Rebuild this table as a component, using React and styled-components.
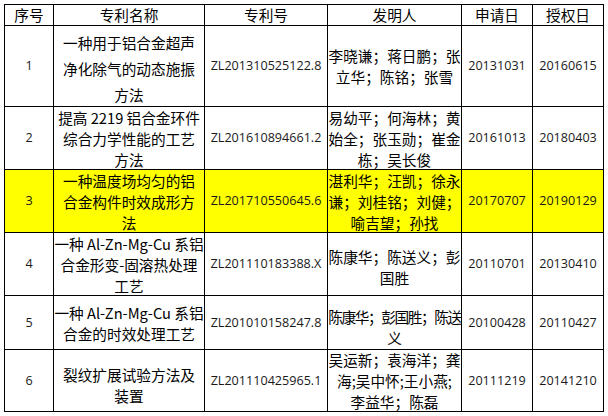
import React from "react";
import styled, { createGlobalStyle } from "styled-components";

const GlobalStyle = createGlobalStyle`
  html, body {
    margin: 0;
    padding: 0;
    background: #ffffff;
  }
  body {
    font-family: "Noto Sans CJK SC", "Noto Sans", sans-serif;
    color: #000000;
  }
`;

const columns = [
  { key: "no", label: "序号", width: 49 },
  { key: "title", label: "专利名称", width: 151 },
  { key: "num", label: "专利号", width: 123 },
  { key: "inventors", label: "发明人", width: 134 },
  { key: "applied", label: "申请日", width: 71 },
  { key: "granted", label: "授权日", width: 71 },
];

const patents = [
  {
    no: "1",
    title: ["一种用于铝合金超声", "净化除气的动态施振", "方法"],
    titleGap: 26,
    titleShift: 3,
    num: "ZL201310525122.8",
    inventors: ["李晓谦；蒋日鹏；张", "立华；陈铭；张雪"],
    applied: "20131031",
    granted: "20160615",
    height: 81,
  },
  {
    no: "2",
    title: ["提高 2219 铝合金环件", "综合力学性能的工艺", "方法"],
    num: "ZL201610894661.2",
    inventors: ["易幼平；何海林；黄", "始全；张玉勋；崔金", "栋；吴长俊"],
    applied: "20161013",
    granted: "20180403",
    height: 63,
  },
  {
    no: "3",
    title: ["一种温度场均匀的铝", "合金构件时效成形方", "法"],
    num: "ZL201710550645.6",
    inventors: ["湛利华；汪凯；徐永", "谦；刘桂铭；刘健；", "喻吉望；孙找"],
    applied: "20170707",
    granted: "20190129",
    height: 63,
    highlight: true,
  },
  {
    no: "4",
    title: ["一种 Al-Zn-Mg-Cu 系铝", "合金形变-固溶热处理", "工艺"],
    num: "ZL201110183388.X",
    inventors: ["陈康华；陈送义；彭", "国胜"],
    inventorsShift: 3,
    applied: "20110701",
    granted: "20130410",
    height: 63,
  },
  {
    no: "5",
    title: ["一种 Al-Zn-Mg-Cu 系铝", "合金的时效处理工艺"],
    num: "ZL201010158247.8",
    inventors: ["陈康华；彭国胜；陈送", "义"],
    inventorsTight: true,
    inventorsShift: 4,
    applied: "20100428",
    granted: "20110427",
    height: 54,
  },
  {
    no: "6",
    title: ["裂纹扩展试验方法及", "装置"],
    titleShift: 4,
    num: "ZL201110425965.1",
    inventors: ["吴运新；袁海洋；龚", "海;吴中怀;王小燕;", "李益华；陈磊"],
    applied: "20111219",
    granted: "20141210",
    height: 62,
  },
];

const Sheet = styled.div`
  padding: 4px 0 0 4px;
`;

const Table = styled.table`
  border-collapse: collapse;
  table-layout: fixed;
  width: 600px;
`;

const HeadCell = styled.th`
  padding: 0;
  border: 1px solid #000;
  font-weight: normal;
`;

const Row = styled.tr`
  background: ${(p) => (p.$highlight ? "#ffff00" : "#ffffff")};
`;

const Cell = styled.td`
  padding: 0;
  border: 1px solid #000;
`;

const Content = styled.div`
  height: ${(p) => p.$height - 1}px;
  display: flex;
  flex-direction: column;
  justify-content: center;
  align-items: center;
  overflow: visible;
  white-space: nowrap;
  padding-top: ${(p) => (p.$shift || 0) * 2}px;
  box-sizing: border-box;
  font-size: ${(p) => (p.$latin ? "12.6px" : "14.67px")};
  line-height: 20px;
  font-family: ${(p) =>
    p.$latin
      ? '"Open Sans", "Noto Sans", sans-serif'
      : '"Noto Sans CJK SC", "Noto Sans", sans-serif'};
  color: ${(p) => (p.$latin ? "#1a1a1a" : "#000")};
`;

const Line = styled.span`
  display: block;
  flex: none;
  line-height: ${(p) => p.$gap || 21}px;
  letter-spacing: ${(p) => (p.$tight ? "-1.4px" : "0")};
  margin: ${(p) => (p.$tight ? "0 -4px" : "0")};
`;

const Lines = ({ items, gap, tight }) =>
  items.map((text, i) => (
    <Line key={i} $gap={gap} $tight={tight && i === 0}>
      {text}
    </Line>
  ));

export default function App() {
  return (
    <Sheet>
      <GlobalStyle />
      <Table>
        <colgroup>
          {columns.map((c) => (
            <col key={c.key} style={{ width: c.width }} />
          ))}
        </colgroup>
        <thead>
          <tr>
            {columns.map((c) => (
              <HeadCell key={c.key}>
                <Content $height={21}>{c.label}</Content>
              </HeadCell>
            ))}
          </tr>
        </thead>
        <tbody>
          {patents.map((p) => (
            <Row key={p.no} $highlight={p.highlight}>
              <Cell>
                <Content $height={p.height} $latin>
                  {p.no}
                </Content>
              </Cell>
              <Cell>
                <Content $height={p.height} $shift={p.titleShift}>
                  <Lines items={p.title} gap={p.titleGap} />
                </Content>
              </Cell>
              <Cell>
                <Content $height={p.height} $latin>
                  {p.num}
                </Content>
              </Cell>
              <Cell>
                <Content $height={p.height} $shift={p.inventorsShift}>
                  <Lines items={p.inventors} tight={p.inventorsTight} />
                </Content>
              </Cell>
              <Cell>
                <Content $height={p.height} $latin>
                  {p.applied}
                </Content>
              </Cell>
              <Cell>
                <Content $height={p.height} $latin>
                  {p.granted}
                </Content>
              </Cell>
            </Row>
          ))}
        </tbody>
      </Table>
    </Sheet>
  );
}
